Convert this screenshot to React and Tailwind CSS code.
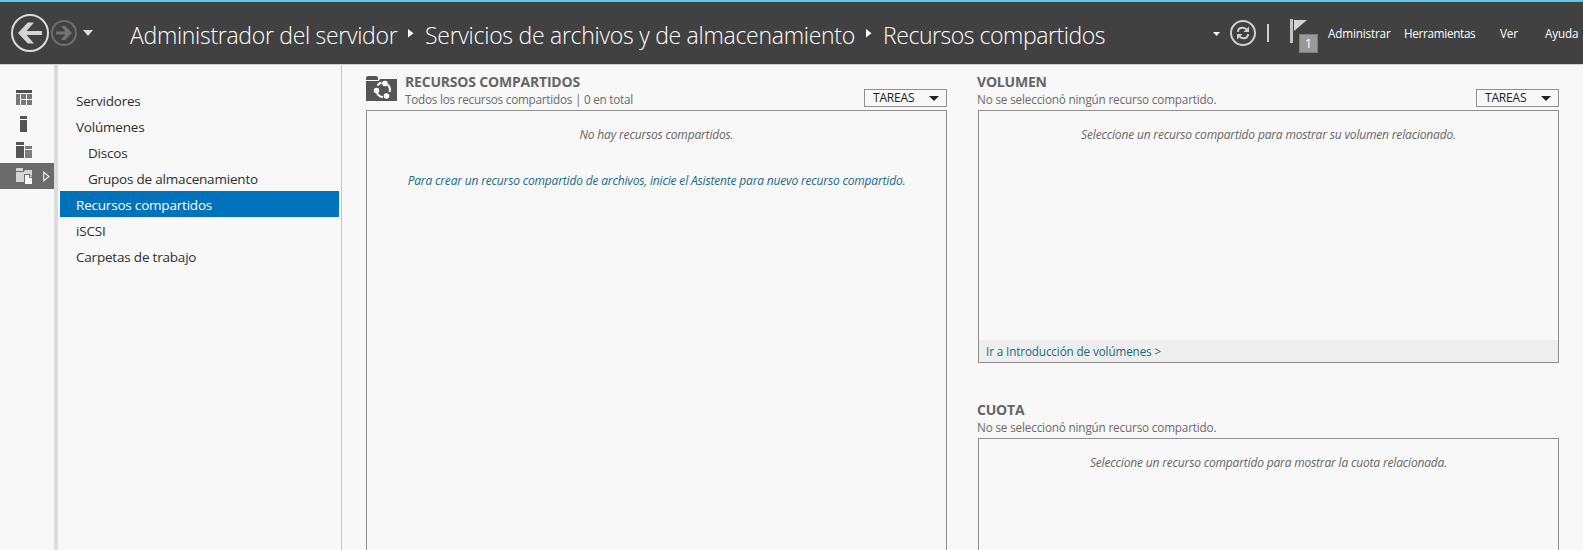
import React from "react";

const BackIcon = () => (
  <svg width="38" height="38" viewBox="0 0 38 38" fill="none">
    <circle cx="19" cy="19" r="18" stroke="#dcdcdc" strokeWidth="2" />
    <path d="M31 16.900v4.200H15.600L23 29.500h-6.200L7 19l9.800-10.500H23l-7.400 8.400z" fill="#d4d4d4" />
  </svg>
);

const ForwardIcon = () => (
  <svg width="26" height="26" viewBox="0 0 26 26" fill="none">
    <circle cx="13" cy="13" r="12" stroke="#6e6e6e" strokeWidth="2" />
    <path d="M5 11.500v3h9.500L9.800 20h4.400L21 13l-6.800-7H9.800l4.700 5.500z" fill="#737373" />
  </svg>
);

const RefreshIcon = () => (
  <svg width="26" height="26" viewBox="0 0 26 26" fill="none">
    <circle cx="13" cy="13" r="12" stroke="#d0d0d0" strokeWidth="2" />
    <path d="M8 12c0-2.800 2-4.300 4.500-4.300 1.500 0 2.800.5 3.800 1.700M18 14c0 2.800-2 4.300-4.500 4.300-1.500 0-2.800-.5-3.800-1.700" stroke="#d0d0d0" strokeWidth="2" />
    <path d="M19 6.500V12h-5.500zM7 19.500V14h5.500z" fill="#d0d0d0" />
  </svg>
);

const FlagIcon = () => (
  <svg width="18" height="24" viewBox="0 0 18 24">
    <path d="M0 0h3v24H0z" fill="#c4c4c4" />
    <path d="M4 1h13L4 12z" fill="#d4d4d4" />
  </svg>
);

const CrumbArrow = () => (
  <svg className="mt-[27px] shrink-0" width="6" height="9" viewBox="0 0 6 9">
    <path d="M0 0l5.500 4.250L0 8.500z" fill="#fff" />
  </svg>
);

const DownArrow = ({ className }) => (
  <svg className={className} viewBox="0 0 10 6" preserveAspectRatio="none">
    <path d="M0 0h10L5 6z" fill="currentColor" />
  </svg>
);

const DashboardIcon = () => (
  <svg width="16" height="16" viewBox="0 0 16 16" shapeRendering="crispEdges">
    <path d="M0 0h16v3H0z" fill="#505050" />
    <path d="M0 4h4v11H0zM5 4h5v5H5zM11 4h5v5h-5zM5 10h5v5H5zM11 10h5v5h-5z" fill="#777" />
  </svg>
);

const ServerIcon = () => (
  <svg width="16" height="16" viewBox="0 0 16 16" shapeRendering="crispEdges">
    <path d="M4 0h7v3H4zM4 4h7v12H4z" fill="#555" />
  </svg>
);

const ServersIcon = () => (
  <svg width="16" height="16" viewBox="0 0 16 16" shapeRendering="crispEdges">
    <path d="M0 0h8v3H0zM0 4h8v12H0z" fill="#555" />
    <path d="M9 4h7v3H9zM9 8h7v8H9z" fill="#7c7c7c" />
  </svg>
);

const FilesIcon = () => (
  <svg width="17" height="17" viewBox="0 0 17 17">
    <path d="M0 .5L.5 0h6l.5.5V3H0zM0 4h7.500L9 2h7v12H0z" fill="#d6d6d6" />
    <path d="M8.500 6.500H14l2.500 2.500v7.500h-8z" fill="#fff" stroke="#6b6b6b" strokeWidth="1" />
    <path d="M13.500 6.500v3h3" fill="none" stroke="#6b6b6b" strokeWidth="1" />
  </svg>
);

const ShareIcon = () => (
  <svg className="mt-[10px] shrink-0" width="31" height="26" viewBox="0 0 31 26" fill="none">
    <path d="M0 2.500L1.500 1h9L12 2.500V5H0zM0 6h12.500l1.500-2h17v22H0z" fill="#555" />
    <g stroke="#fff" strokeWidth="2">
      <path d="M11.500 10.500a7 7 0 0 1 4-3" />
      <path d="M21.500 9.500a7 7 0 0 1 2 7.500" />
      <path d="M17 22a7 7 0 0 1-6-4" />
    </g>
    <g fill="#fff">
      <circle cx="19" cy="8.500" r="2.800" />
      <circle cx="10.500" cy="15.500" r="2.800" />
      <circle cx="20.500" cy="21" r="2.800" />
    </g>
  </svg>
);

const crumb = "mt-[17px] whitespace-nowrap text-[23px] leading-8 font-light";

const Header = () => (
  <header className="flex h-16 items-start border-t-2 border-[#63c5ea] bg-[#414141] text-white">
    <div className="ml-[11px] mt-3 shrink-0"><BackIcon /></div>
    <div className="ml-[2px] mt-[18px] shrink-0"><ForwardIcon /></div>
    <DownArrow className="ml-[6px] mt-7 h-[6px] w-[10px] shrink-0 text-[#dcdcdc]" />
    <nav className="ml-[37px] flex w-[1083px] shrink-0 items-start">
      <div className={crumb + " w-[278px] tracking-[-0.300px]"}>Administrador del servidor</div>
      <CrumbArrow />
      <div className={crumb + " ml-[11px] w-[441px] tracking-[-0.270px]"}>Servicios de archivos y de almacenamiento</div>
      <CrumbArrow />
      <div className={crumb + " ml-[11px] tracking-[-0.450px]"}>Recursos compartidos</div>
    </nav>
    <DownArrow className="mt-[30px] h-1 w-[7px] shrink-0 text-white" />
    <div className="ml-[10px] mt-[18px] shrink-0"><RefreshIcon /></div>
    <div className="ml-[11px] mt-[22px] h-[18px] w-[2px] shrink-0 bg-[#cfcfcf]" />
    <div className="relative ml-[21px] mt-[17px] shrink-0">
      <FlagIcon />
      <span className="absolute left-[9px] top-[15px] flex h-[19px] w-[19px] items-center justify-center border border-[#808080] bg-[#999] text-[13px] leading-none">1</span>
    </div>
    <div className="ml-[20px] mt-[21px] flex whitespace-nowrap text-[11.700px] leading-5 tracking-[-0.150px]">
      <span className="w-[76px]">Administrar</span>
      <span className="w-[96px] tracking-[-0.300px]">Herramientas</span>
      <span className="w-[45px]">Ver</span>
      <span>Ayuda</span>
    </div>
  </header>
);

const rail = [
  { Icon: DashboardIcon },
  { Icon: ServerIcon },
  { Icon: ServersIcon },
  { Icon: FilesIcon, active: true },
];

const Rail = () => (
  <aside className="flex w-[54px] shrink-0 flex-col pt-[20px]">
    {rail.map(({ Icon, active }, i) => (
      <div key={i} className={active ? "flex h-[26px] items-start bg-[#6b6b6b] pl-4 pt-[5px]" : "flex h-[26px] items-start pl-4 pt-[5px]"}>
        <Icon />
        {active && (
          <svg className="ml-[10px] mt-[3px]" width="7" height="11" viewBox="0 0 7 11">
            <path d="M.7 1.200L6 5.500.7 9.800z" fill="none" stroke="#f0f0f0" strokeWidth="1.100" />
          </svg>
        )}
      </div>
    ))}
  </aside>
);

const links = [
  { label: "Servidores" },
  { label: "Volúmenes" },
  { label: "Discos", child: true },
  { label: "Grupos de almacenamiento", child: true },
  { label: "Recursos compartidos", active: true },
  { label: "iSCSI" },
  { label: "Carpetas de trabajo" },
];

const Sidebar = () => (
  <nav className="w-[288px] shrink-0 border-l-4 border-r border-l-[#dcdcdc] border-r-[#c4c4c4] pl-[2px] pr-[2px] pt-[22px]">
    {links.map(({ label, child, active }) => (
      <div
        key={label}
        className={
          "flex h-[26px] items-center whitespace-nowrap pt-[2px] text-[13.500px] leading-5 tracking-[-0.200px] " +
          (active ? "bg-[#0072bc] text-white " : "text-[#2f2f2f] ") +
          (child ? "pl-7" : "pl-4")
        }
      >
        {label}
      </div>
    ))}
  </nav>
);

const TaskButton = () => (
  <button className="mt-[24px] flex h-[18px] w-[83px] shrink-0 items-center justify-between border border-[#8f8f8f] pl-2 pr-[7px] text-[12px] leading-4 tracking-[-0.180px] text-[#222]">
    TAREAS
    <DownArrow className="h-[5px] w-[10px]" />
  </button>
);

const PanelHead = ({ title, subtitle, tasks, icon }) => (
  <div className="flex h-[45px] items-start">
    {icon}
    <div className={icon ? "ml-2 mt-[7px] grow whitespace-nowrap tracking-[-0.220px]" : "ml-[-1px] mt-[7px] grow whitespace-nowrap tracking-[-0.150px]"}>
      <h2 className="text-[14px] leading-5 font-bold tracking-[-0.200px] text-[#666]">{title}</h2>
      <p className="mt-[-1px] text-[11.700px] leading-4 text-[#6b6b6b]">{subtitle}</p>
    </div>
    {tasks && <TaskButton />}
  </div>
);

const Message = ({ children, className }) => (
  <p className={"whitespace-nowrap text-center text-[12px] italic leading-4 tracking-[-0.170px] " + className}>{children}</p>
);

export default function App() {
  return (
    <div className="flex h-[550px] w-[1583px] flex-col overflow-hidden bg-[#f8f8f8] font-['Open_Sans',sans-serif]">
      <Header />
      <div className="flex min-h-0 flex-1 border-t border-[#d0d0d0]">
        <Rail />
        <Sidebar />
        <main className="flex grow">
          <section className="ml-[24px] flex w-[581px] shrink-0 flex-col">
            <PanelHead icon={<ShareIcon />} title="RECURSOS COMPARTIDOS" subtitle="Todos los recursos compartidos | 0 en total" tasks />
            <div className="grow border border-b-0 border-[#8f8f8f] pt-4">
              <Message className="text-[#666]">No hay recursos compartidos.</Message>
              <Message className="mt-[30px] text-[#1a6a8a]">
                Para crear un recurso compartido de archivos, inicie el Asistente para nuevo recurso compartido.
              </Message>
            </div>
          </section>
          <div className="ml-[31px] flex w-[581px] shrink-0 flex-col">
            <section>
              <PanelHead title="VOLUMEN" subtitle="No se seleccionó ningún recurso compartido." tasks />
              <div className="flex h-[253px] flex-col justify-between border border-[#8f8f8f] pt-4">
                <Message className="text-[#666]">Seleccione un recurso compartido para mostrar su volumen relacionado.</Message>
                <a className="flex h-[22px] items-center bg-[#eee] pl-[7px] text-[11.700px] leading-4 tracking-[-0.120px] text-[#1a6a80]">
                  Ir a Introducción de volúmenes &gt;
                </a>
              </div>
            </section>
            <section className="mt-[30px] flex grow flex-col">
              <PanelHead title="CUOTA" subtitle="No se seleccionó ningún recurso compartido." />
              <div className="grow border border-b-0 border-[#8f8f8f] pt-4">
                <Message className="text-[#666]">Seleccione un recurso compartido para mostrar la cuota relacionada.</Message>
              </div>
            </section>
          </div>
        </main>
      </div>
    </div>
  );
}
